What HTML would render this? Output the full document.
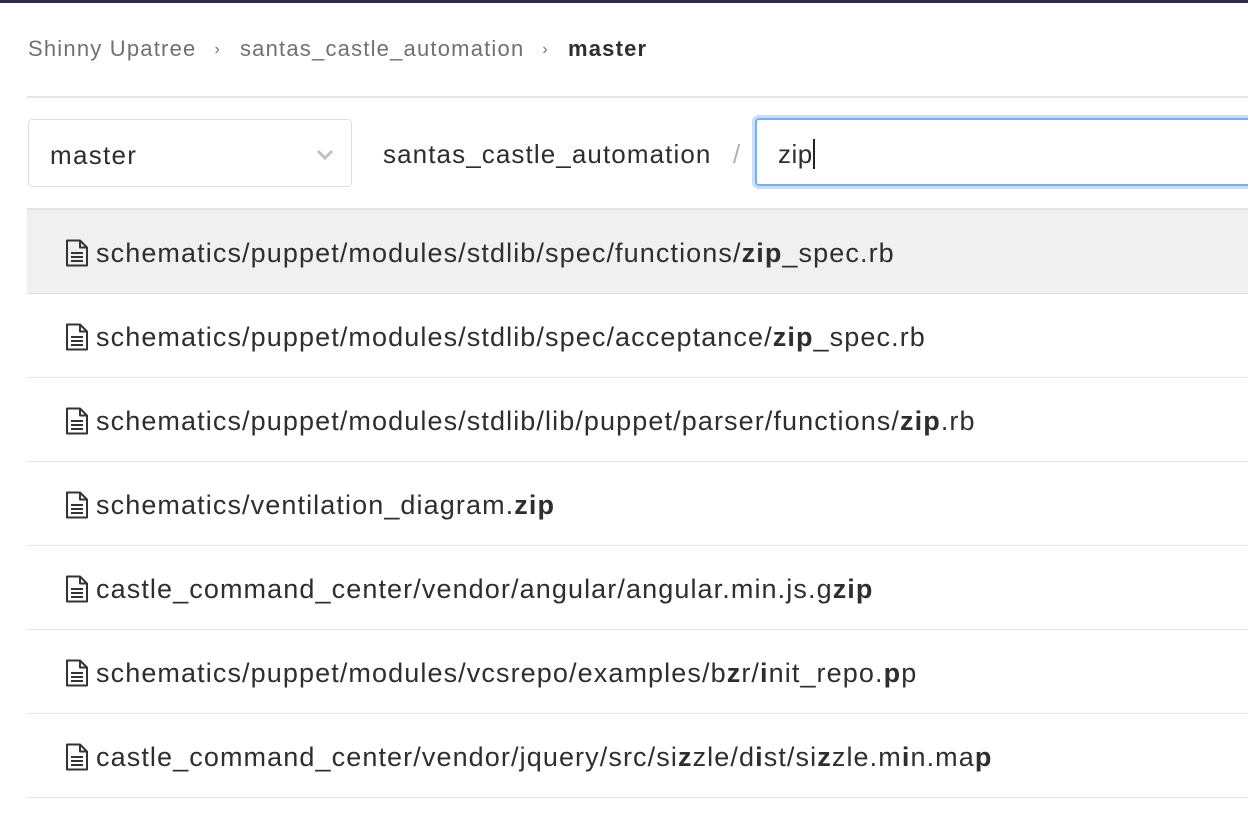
<!DOCTYPE html>
<html><head><style>
body{margin:0;width:1248px;height:826px;overflow:hidden;background:#fff;font-family:"Liberation Sans",sans-serif;color:#2e2e2e;}
.top{position:absolute;left:0;top:0;width:1248px;height:3px;background:#2b2c4f;}
.bc{position:absolute;left:28px;top:36px;font-size:22px;color:#707070;white-space:nowrap;letter-spacing:1.2px;}
.bc .s{margin:0 19px 0 18px;font-size:16px;position:relative;top:-2px;}
.bc b{color:#2e2e2e;}
.hr{position:absolute;left:27px;top:96px;width:1221px;height:2px;background:#e5e5e5;}
.sel{position:absolute;left:28px;top:119px;width:324px;height:68px;border:1px solid #e0e0e0;border-radius:4px;box-sizing:border-box;}
.sel span{position:absolute;left:21px;top:20px;font-size:26px;color:#2e2e2e;letter-spacing:1.3px;}
.sel svg{position:absolute;left:287px;top:29px;}
.proj{position:absolute;left:383px;top:139px;font-size:26px;color:#2e2e2e;letter-spacing:1.1px;}
.sl{position:absolute;left:733px;top:139px;font-size:26px;color:#b0b0b0;}
.inp{position:absolute;left:755px;top:118px;width:520px;height:68px;border:2px solid #73b0f4;border-radius:4px;box-sizing:border-box;box-shadow:0 0 0 3px #c7dffb;}
.inp .t{position:absolute;left:21px;top:19px;font-size:26px;letter-spacing:0.5px;}
.cur{display:inline-block;width:2px;height:30px;background:#222;vertical-align:-6px;}
.list{position:absolute;left:27px;top:208px;width:1221px;border-top:2px solid #e5e5e5;}
.row{height:83px;border-bottom:1px solid #e5e5e5;position:relative;font-size:27px;letter-spacing:1.1px;}
.row.a{background:#f0f0f0;border-bottom-color:#e0e0e0;}
.row svg{position:absolute;left:38px;top:29px;}
.row span{position:absolute;left:69px;top:28px;white-space:nowrap;}
</style></head><body>
<div class="top"></div>
<div class="bc">Shinny Upatree<span class="s">&#x203A;</span>santas_castle_automation<span class="s">&#x203A;</span><b>master</b></div>
<div class="hr"></div>
<div class="sel"><span>master</span><svg width="18" height="12" viewBox="0 0 18 12"><path d="M2 2l7 7 7-7" stroke="#c0c0c0" stroke-width="3" fill="none"/></svg></div>
<div class="proj">santas_castle_automation</div>
<div class="sl">/</div>
<div class="inp"><div class="t">zip<i class="cur"></i></div></div>
<div class="list">
<div class="row a"><svg width="24" height="28" viewBox="0 0 24 28"><path d="M2 1.5h13l7 7v18H2z M15 1.5v7h7" stroke="#333" stroke-width="2" fill="none" stroke-linejoin="round"/><path d="M6 14h12M6 18h12M6 22h12" stroke="#333" stroke-width="2"/></svg><span>schematics/puppet/modules/stdlib/spec/functions/<b>zip</b>_spec.rb</span></div>
<div class="row"><svg width="24" height="28" viewBox="0 0 24 28"><path d="M2 1.5h13l7 7v18H2z M15 1.5v7h7" stroke="#333" stroke-width="2" fill="none" stroke-linejoin="round"/><path d="M6 14h12M6 18h12M6 22h12" stroke="#333" stroke-width="2"/></svg><span>schematics/puppet/modules/stdlib/spec/acceptance/<b>zip</b>_spec.rb</span></div>
<div class="row"><svg width="24" height="28" viewBox="0 0 24 28"><path d="M2 1.5h13l7 7v18H2z M15 1.5v7h7" stroke="#333" stroke-width="2" fill="none" stroke-linejoin="round"/><path d="M6 14h12M6 18h12M6 22h12" stroke="#333" stroke-width="2"/></svg><span>schematics/puppet/modules/stdlib/lib/puppet/parser/functions/<b>zip</b>.rb</span></div>
<div class="row"><svg width="24" height="28" viewBox="0 0 24 28"><path d="M2 1.5h13l7 7v18H2z M15 1.5v7h7" stroke="#333" stroke-width="2" fill="none" stroke-linejoin="round"/><path d="M6 14h12M6 18h12M6 22h12" stroke="#333" stroke-width="2"/></svg><span>schematics/ventilation_diagram.<b>zip</b></span></div>
<div class="row"><svg width="24" height="28" viewBox="0 0 24 28"><path d="M2 1.5h13l7 7v18H2z M15 1.5v7h7" stroke="#333" stroke-width="2" fill="none" stroke-linejoin="round"/><path d="M6 14h12M6 18h12M6 22h12" stroke="#333" stroke-width="2"/></svg><span>castle_command_center/vendor/angular/angular.min.js.g<b>zip</b></span></div>
<div class="row"><svg width="24" height="28" viewBox="0 0 24 28"><path d="M2 1.5h13l7 7v18H2z M15 1.5v7h7" stroke="#333" stroke-width="2" fill="none" stroke-linejoin="round"/><path d="M6 14h12M6 18h12M6 22h12" stroke="#333" stroke-width="2"/></svg><span>schematics/puppet/modules/vcsrepo/examples/b<b>z</b>r/<b>i</b>nit_repo.<b>p</b>p</span></div>
<div class="row"><svg width="24" height="28" viewBox="0 0 24 28"><path d="M2 1.5h13l7 7v18H2z M15 1.5v7h7" stroke="#333" stroke-width="2" fill="none" stroke-linejoin="round"/><path d="M6 14h12M6 18h12M6 22h12" stroke="#333" stroke-width="2"/></svg><span>castle_command_center/vendor/jquery/src/si<b>z</b>zle/d<b>i</b>st/si<b>z</b>zle.m<b>i</b>n.ma<b>p</b></span></div>
</div>
</body></html>
